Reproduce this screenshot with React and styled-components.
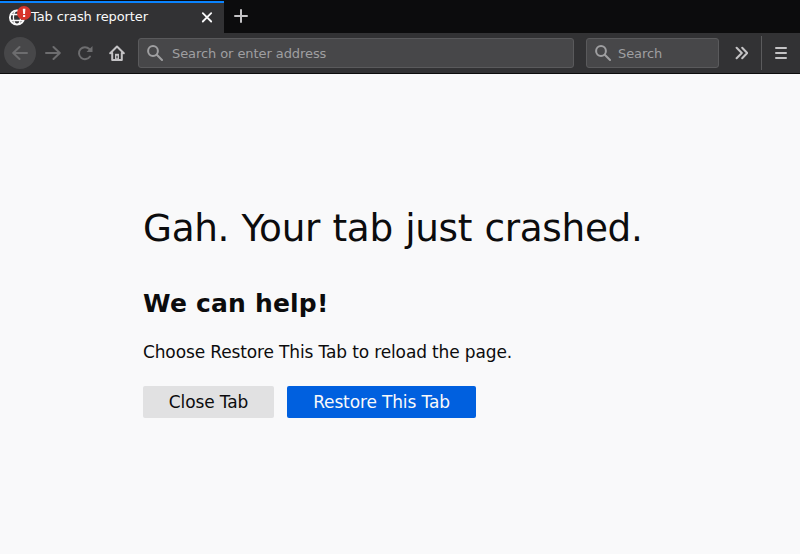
import React from "react";
import styled, { createGlobalStyle } from "styled-components";

const GlobalStyle = createGlobalStyle`
  *, *::before, *::after { box-sizing: border-box; }
  body {
    margin: 0;
    background: #f9f9fa;
    color: #0c0c0d;
    font-family: "DejaVu Sans", sans-serif;
  }
`;

const Window = styled.div`
  display: flex;
  flex-direction: column;
  height: 100vh;
  overflow: hidden;
`;

const TabStrip = styled.div`
  display: flex;
  flex: none;
  height: 33px;
  background: #0c0c0d;
`;

const Tab = styled.div`
  display: flex;
  align-items: center;
  width: 224px;
  padding: 0 9px 0 8px;
  background: #323234;
  color: #f9f9fa;
  font-size: 13px;
  letter-spacing: -0.1px;
  box-shadow: inset 0 1px #0c0c0d, inset 0 3px #0a84ff;
`;

const Favicon = styled.div`
  position: relative;
  width: 23px;
  height: 17px;
  margin-top: 1px;
`;

const CrashBadge = styled.svg`
  position: absolute;
  left: 9px;
  top: -3px;
`;

const TabTitle = styled.span`
  flex: 1;
  line-height: 17px;
`;

const IconButton = styled.button`
  display: flex;
  align-items: center;
  justify-content: center;
  flex: none;
  width: ${(p) => p.$width || 32}px;
  height: 32px;
  padding: 0;
  border: 0;
  border-radius: ${(p) => (p.$round ? "50%" : "2px")};
  background: ${(p) => (p.$round ? "#474749" : "transparent")};
  color: ${(p) => (p.$dim ? "#6d6d6f" : "#c4c3c5")};
`;

const Toolbar = styled.div`
  display: flex;
  align-items: center;
  flex: none;
  height: 41px;
  padding: 0 3px 0 4px;
  background: #323234;
  border-bottom: 1px solid #0c0c0d;
`;

const Field = styled.div`
  display: flex;
  align-items: center;
  gap: ${(p) => p.$iconGap}px;
  width: ${(p) => p.$width}px;
  height: 30px;
  margin-left: ${(p) => p.$gap}px;
  padding-left: 8px;
  border: 1px solid #5a5a5c;
  border-radius: 3px;
  background: #474749;
  color: #9f9fa1;
  font-size: 13px;
  letter-spacing: -0.08px;
`;

const Divider = styled.div`
  width: 1px;
  height: 34px;
  margin-right: 3px;
  background: #5b5b5d;
`;

const Page = styled.main`
  flex: 1;
  padding: 130px 143px 0;
`;

const Title = styled.h1`
  margin: 0;
  font-size: 37.4px;
  font-weight: 400;
  line-height: 48px;
  letter-spacing: -0.32px;
  word-spacing: 0.8px;
  white-space: nowrap;
`;

const Subtitle = styled.h2`
  margin: 37px 0 0;
  font-size: 25px;
  font-weight: 700;
  line-height: 30px;
  letter-spacing: 0.2px;
`;

const Message = styled.p`
  margin: 22px 0 0;
  font-size: 17px;
  line-height: 22px;
  letter-spacing: -0.135px;
  white-space: nowrap;
`;

const Actions = styled.div`
  display: flex;
  gap: 13px;
  margin-top: 23px;
`;

const ActionButton = styled.button`
  width: ${(p) => p.$width}px;
  height: 32px;
  padding: 0;
  border: 0;
  border-radius: 2px;
  background: ${(p) => (p.$primary ? "#0060df" : "#e1e1e2")};
  color: ${(p) => (p.$primary ? "#f9f9fa" : "#0c0c0d")};
  font: 17px "DejaVu Sans", sans-serif;
  letter-spacing: -0.135px;
  white-space: nowrap;
`;

const Icon = ({ size = 16, weight = 2, children }) => (
  <svg
    width={size}
    height={size}
    viewBox="0 0 16 16"
    fill="none"
    stroke="currentColor"
    strokeWidth={weight}
    strokeLinecap="round"
    strokeLinejoin="round"
  >
    {children}
  </svg>
);

const SearchIcon = () => (
  <Icon>
    <circle cx="6" cy="6" r="4.9" />
    <path d="M9.8 9.8 15 15" />
  </Icon>
);

export default function App() {
  return (
    <Window>
      <GlobalStyle />
      <TabStrip>
        <Tab>
          <Favicon>
            <svg width="17" height="17" viewBox="0 0 17 17" fill="none" stroke="#f9f9fa" strokeWidth="1.3">
              <circle cx="9" cy="8.5" r="7.1" strokeWidth="1.9" />
              <ellipse cx="9" cy="8.5" rx="3.6" ry="7" />
              <path d="M2 5.5h14M2 11.5h14" />
            </svg>
            <CrashBadge width="14" height="14" viewBox="0 0 14 14">
              <circle cx="7" cy="7" r="7" fill="#d7352c" />
              <path d="M5.8 2.8h2.6L8 8H6.2z" fill="#fff" />
              <rect x="6" y="9" width="2.2" height="2" rx=".6" fill="#fff" />
            </CrashBadge>
          </Favicon>
          <TabTitle>Tab crash reporter</TabTitle>
          <Icon weight={1.8}>
            <path d="m3.8 4.1 8.4 8.4M12.2 4.1l-8.4 8.4" />
          </Icon>
        </Tab>
        <IconButton $width={34} aria-label="New tab">
          <Icon>
            <path d="M8 2v12M2 8h12" />
          </Icon>
        </IconButton>
      </TabStrip>

      <Toolbar>
        <IconButton $round $dim aria-label="Back">
          <Icon>
            <path d="M15 8H1.5M7.5 2 1.2 8l6.3 6" />
          </Icon>
        </IconButton>
        <IconButton $dim aria-label="Forward" $width={34}>
          <Icon>
            <path d="M1 8h13.5M8.5 2l6.3 6-6.3 6" />
          </Icon>
        </IconButton>
        <IconButton $dim aria-label="Reload" $width={30}>
          <Icon>
            <path d="M13 11.5A6 6 0 1 1 12.3 4" />
            <path d="M15.5 1v6H9.5z" fill="currentColor" stroke="none" />
          </Icon>
        </IconButton>
        <IconButton aria-label="Home" $width={34}>
          <Icon>
            <path d="M1.2 8.3 8 1.5l6.8 6.8M3.2 8v7h9.6V8" />
            <path d="M6 15V8.8h4V15z" fill="currentColor" stroke="none" />
            <path d="M8 10.8v2.4" stroke="#323234" strokeWidth="1.2" strokeLinecap="butt" />
          </Icon>
        </IconButton>
        <Field $width={436} $gap={4} $iconGap={9}>
          <SearchIcon />
          <span>Search or enter address</span>
        </Field>
        <Field $width={133} $gap={12} $iconGap={7}>
          <SearchIcon />
          <span>Search</span>
        </Field>
        <IconButton aria-label="More tools" $width={42}>
          <Icon>
            <path d="m4.6 2.8 5.2 5.2-5.2 5.2M10.2 2.8l5 5.2-5 5.2" />
          </Icon>
        </IconButton>
        <Divider />
        <IconButton aria-label="Menu">
          <Icon>
            <path d="M3 3h10M3 8h10M3 13h10" />
          </Icon>
        </IconButton>
      </Toolbar>

      <Page>
        <Title>Gah. Your tab just crashed.</Title>
        <Subtitle>We can help!</Subtitle>
        <Message>Choose Restore This Tab to reload the page.</Message>
        <Actions>
          <ActionButton $width={131}>Close Tab</ActionButton>
          <ActionButton $width={189} $primary>
            Restore This Tab
          </ActionButton>
        </Actions>
      </Page>
    </Window>
  );
}
